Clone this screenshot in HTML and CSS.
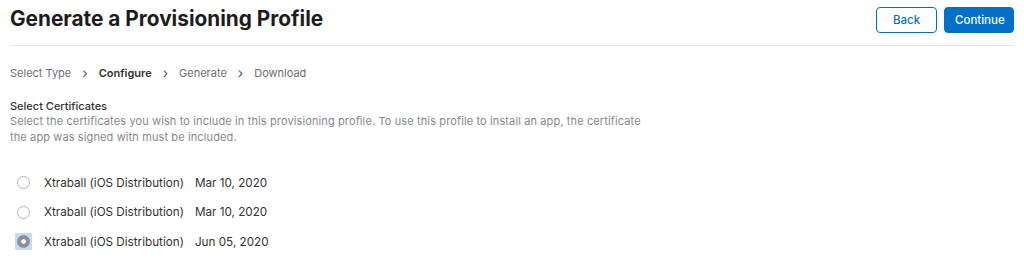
FILE: index.html
```html
<!DOCTYPE html>
<html lang="en">
<head>
    <meta charset="UTF-8">
    <title>Generate a Provisioning Profile</title>
    <link rel="stylesheet" href="styles.css">
</head>
<body>
    <div class="header">
        <h1>Generate a Provisioning Profile</h1>
        <div class="actions">
            <button class="btn btn-secondary">Back</button>
            <button class="btn btn-primary">Continue</button>
        </div>
    </div>

    <div class="steps">
        <span class="step">Select Type</span>
        <span class="chevron">&rsaquo;</span>
        <span class="step current">Configure</span>
        <span class="chevron">&rsaquo;</span>
        <span class="step">Generate</span>
        <span class="chevron">&rsaquo;</span>
        <span class="step">Download</span>
    </div>

    <div class="section">
        <h2>Select Certificates</h2>
        <p class="help">Select the certificates you wish to include in this provisioning profile. To use this profile to install an app, the certificate<br>the app was signed with must be included.</p>
    </div>

    <div class="cert-list">
        <label class="cert-row">
            <span class="radio-wrap"><span class="radio"></span></span>
            <span class="cert-name">Xtraball (iOS Distribution)</span>
            <span class="cert-date">Mar 10, 2020</span>
        </label>
        <label class="cert-row">
            <span class="radio-wrap"><span class="radio"></span></span>
            <span class="cert-name">Xtraball (iOS Distribution)</span>
            <span class="cert-date">Mar 10, 2020</span>
        </label>
        <label class="cert-row">
            <span class="radio-wrap focused"><span class="radio checked"></span></span>
            <span class="cert-name">Xtraball (iOS Distribution)</span>
            <span class="cert-date">Jun 05, 2020</span>
        </label>
    </div>
</body>
</html>
```

FILE: styles.css
```css
body {
    font-family: Inter, "Noto Sans", sans-serif;
    margin: 0;
    padding: 0 10px;
    background: #fff;
    color: #333;
}
.header {
    display: flex;
    justify-content: space-between;
    align-items: center;
    height: 45px;
    border-bottom: 1px solid #e6e6e6;
}
h1 {
    margin: 0;
    font-size: 20.8px;
    font-weight: 700;
    color: #1d1d1f;
    padding-bottom: 8px;
}
.actions {
    display: flex;
    gap: 7px;
    padding-bottom: 5px;
}
.btn {
    font-family: inherit;
    font-size: 11.5px;
    font-weight: 500;
    height: 26px;
    border-radius: 4px;
    padding: 0 10px;
    cursor: pointer;
}
.btn-secondary {
    background: #fff;
    color: #0070c9;
    border: 1px solid #0070c9;
    width: 61px;
}
.btn-primary {
    background: #0070c9;
    color: #fff;
    border: 1px solid #0070c9;
    width: 70px;
}
.steps {
    display: flex;
    align-items: center;
    gap: 11px;
    padding-top: 18px;
    font-size: 11px;
    color: #6e6e73;
}
.step.current {
    font-weight: 600;
    color: #333;
}
.chevron {
    font-size: 14px;
    color: #555;
}
.section {
    padding-top: 18px;
}
h2 {
    margin: 0;
    font-size: 11px;
    font-weight: 500;
    color: #333;
}
.help {
    margin: 0;
    font-size: 11px;
    letter-spacing: 0.12px;
    line-height: 16px;
    color: #888;
}
.cert-list {
    padding-top: 23px;
}
.cert-row {
    display: flex;
    align-items: center;
    height: 29.5px;
    font-size: 11.7px;
    color: #333;
}
.radio-wrap {
    display: flex;
    align-items: center;
    justify-content: center;
    width: 17px;
    height: 17px;
    margin: 0 12px 0 5px;
    border-radius: 1px;
}
.radio-wrap.focused {
    background: #c3dbf6;
}
.radio {
    width: 13px;
    height: 13px;
    border: 1px solid #b4b4b4;
    border-radius: 50%;
    box-sizing: border-box;
    background: #fff;
}
.radio.checked {
    border-color: #8e8e93;
    background: radial-gradient(circle, #fff 0 2px, #8e8e93 2.6px);
}
.cert-date {
    margin-left: 11px;
}
```
